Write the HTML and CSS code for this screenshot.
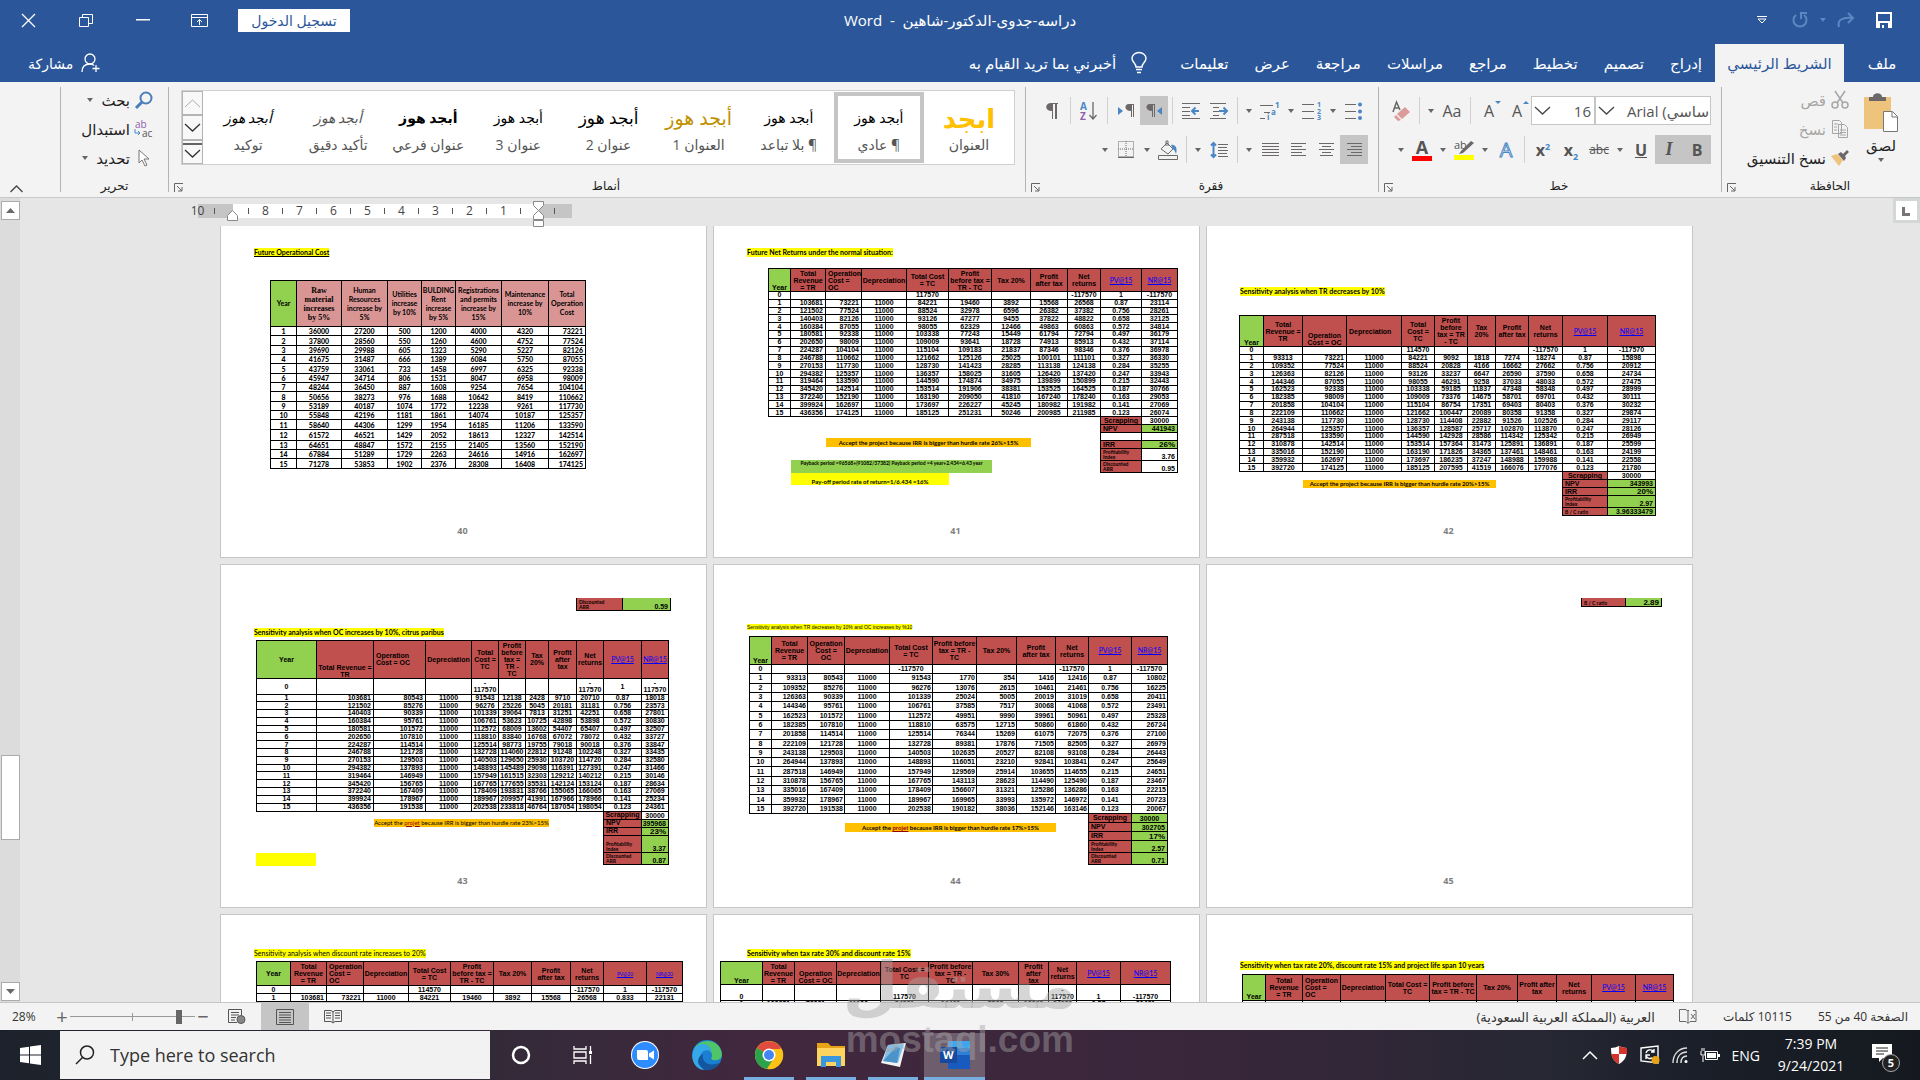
FILE: index.html
```html
<!DOCTYPE html>
<html lang="ar">
<head>
    <meta charset="UTF-8">
    <meta name="viewport" content="width=device-width, initial-scale=1.0">
    <title>دراسه-جدوى-الدكتور-شاهين - Word</title>
    <link rel="stylesheet" href="styles.css">
</head>
<body>
    <header class="titlebar" dir="rtl">
        <div class="quick">
            <button aria-label="حفظ"><svg width="16" height="16" viewBox="0 0 16 16"><path fill="#fff" fill-rule="evenodd" d="M0 0h16v16H0zM2 2v7h12V2zM4 11v5h2v-3h2v3h4v-5z"/></svg></button>
            <button aria-label="إعادة"><svg width="18" height="16" viewBox="0 0 18 16" fill="none" stroke="#5b87c2" stroke-width="2"><path d="M2 15C0 8 5 5 16 6M11 1l5 5-5 5"/></svg></button>
            <span class="arrow faded"></span>
            <button aria-label="تراجع"><svg width="16" height="16" viewBox="0 0 16 16" fill="none" stroke="#5b87c2" stroke-width="2"><path d="M4 3a6.500 6.500 0 1 0 8 0M9 7V1h6"/></svg></button>
            <button aria-label="تخصيص"><svg width="10" height="8" viewBox="0 0 10 8" fill="none" stroke="#fff"><path d="M0 .5h10M1 3h8L5 7z"/></svg></button>
        </div>
        <div class="doc-title">دراسه-جدوى-الدكتور-شاهين &nbsp;-&nbsp; Word</div>
        <div class="window-buttons">
            <button class="sign-in">تسجيل الدخول</button>
            <button aria-label="خيارات الشريط"><svg width="17" height="13" viewBox="0 0 17 13" fill="none" stroke="#fff"><path d="M.5.500h16v12H.5zM.5 3.500h16M8.500 11V5.500M6 8l2.500-2.500L11 8"/></svg></button>
            <button aria-label="تصغير"><svg width="14" height="2" viewBox="0 0 14 2"><path fill="#fff" d="M0 0h14v1.500H0z"/></svg></button>
            <button aria-label="استعادة"><svg width="14" height="13" viewBox="0 0 14 13" fill="none" stroke="#fff"><path d="M.5 3.500h9v9h-9zM3.500 3V.5h10v9H10"/></svg></button>
            <button aria-label="إغلاق"><svg width="13" height="13" viewBox="0 0 13 13" stroke="#fff" stroke-width="1.300"><path d="M0 0l13 13M13 0L0 13"/></svg></button>
        </div>
    </header>

    <nav class="tabs" dir="rtl">
        <button class="file">ملف</button>
        <button class="active">الشريط الرئيسي</button>
        <button>إدراج</button>
        <button>تصميم</button>
        <button>تخطيط</button>
        <button>مراجع</button>
        <button>مراسلات</button>
        <button>مراجعة</button>
        <button>عرض</button>
        <button>تعليمات</button>
        <button class="tell-me"><svg width="16" height="22" viewBox="0 0 16 22" fill="none" stroke="#fff" stroke-width="1.400"><path d="M5 15C5 11 1 10 1 6.500a7 6 0 0 1 14 0C15 10 11 11 11 15zM5 17.500h6M6 20.500h4"/></svg>أخبرني بما تريد القيام به</button>
        <button class="share"><svg width="20" height="20" viewBox="0 0 20 20" fill="none" stroke="#fff" stroke-width="1.300"><circle cx="9" cy="6" r="5"/><path d="M1 19c0-5 3-8 8-8 2 0 3 .5 4 1.500M15 12v7M11.500 15.500h7"/></svg>مشاركة</button>
    </nav>

    <section class="ribbon" dir="rtl">
        <div class="group clipboard">
            <div class="group-body">
                <button class="paste"><svg width="36" height="40" viewBox="0 0 36 40"><path fill="#eec47c" d="M1 5h27v32H1z"/><path fill="#6d6868" d="M6 9V5h4c0-5 9-5 9 0h4v4z"/><path fill="#fff" stroke="#777" d="M20.500 19.500h9l5 5v15h-14z"/><path fill="none" stroke="#777" d="M29 20v5h5"/></svg><span>لصق</span><span class="arrow"></span></button>
                <div class="stack">
                    <button class="off"><svg width="18" height="18" viewBox="0 0 18 18" fill="none" stroke="#a6a6a6" stroke-width="1.500"><path d="M4 0l8 12M14 0L6 12"/><circle cx="4" cy="14" r="3"/><circle cx="14" cy="14" r="3"/></svg>قص</button>
                    <button class="off"><svg width="18" height="18" viewBox="0 0 18 18" fill="#f3f3f3" stroke="#a6a6a6"><path d="M1.500.500h7l2 2v11h-9zM7.500 4.500h6l3 3v10h-9zM9 10h6M9 12.500h6M9 15h6M3 4h4M3 7h3M3 10h3"/></svg>نسخ</button>
                    <button><svg width="18" height="16" viewBox="0 0 18 16"><path fill="#eec47c" d="M0 6l6-2 6 6-4 6z"/><path fill="#6d6868" d="M7 4l3-2 2 2 4-4 2 2-4 4 1 2-2 3z"/></svg>نسخ التنسيق</button>
                </div>
            </div>
            <div class="group-label">الحافظة<svg class="launcher" width="9" height="9" viewBox="0 0 9 9" fill="none" stroke="#666"><path d="M.5 9V.5H9M3 3l5 5M8 4v4H4"/></svg></div>
        </div>

        <div class="group font">
            <div class="group-body rows">
                <div class="tools">
                    <label class="combo name"><input type="text" value="ساسي) Arial" aria-label="الخط"><svg width="17" height="9" viewBox="0 0 17 9" fill="none" stroke="#444" stroke-width="1.300"><path d="M1 1l7.500 7L16 1"/></svg></label>
                    <label class="combo size"><input type="text" value="16" aria-label="حجم الخط"><svg width="17" height="9" viewBox="0 0 17 9" fill="none" stroke="#444" stroke-width="1.300"><path d="M1 1l7.500 7L16 1"/></svg></label>
                    <button>A<i class="up"></i></button>
                    <button>A<i class="down"></i></button>
                    <span class="sep"></span>
                    <button>Aa</button><span class="arrow"></span>
                    <span class="sep"></span>
                    <button aria-label="مسح التنسيق"><svg width="18" height="20" viewBox="0 0 18 20"><path fill="none" stroke="#666" stroke-width="1.500" d="M1 11L4.500 1 8 9M2.500 7h4"/><path fill="#dc9a98" d="M5 13l8-7 5 5-8 7zM4 14l5 5-3 1-4-4z"/></svg></button>
                </div>
                <div class="tools">
                    <button class="on"><b>B</b></button>
                    <button class="on"><b class="serif">I</b></button>
                    <button><b class="under">U</b></button><span class="arrow"></span>
                    <button class="strike">abc</button>
                    <button><b dir="ltr">x<sub>2</sub></b></button>
                    <button><b dir="ltr">x<sup>2</sup></b></button>
                    <span class="sep"></span>
                    <button class="glow">A</button><span class="arrow"></span>
                    <button aria-label="تمييز"><svg width="20" height="20" viewBox="0 0 20 20"><text x="0" y="9" font-size="11" fill="#555">ab</text><path fill="#6d6868" d="M17 1l3 2-11 10-4 1 2-3z"/><path fill="#ff0" d="M0 15h20v5H0z"/></svg></button><span class="arrow"></span>
                    <button class="color"><b>A</b></button><span class="arrow"></span>
                </div>
            </div>
            <div class="group-label">خط<svg class="launcher" width="9" height="9" viewBox="0 0 9 9" fill="none" stroke="#666"><path d="M.5 9V.5H9M3 3l5 5M8 4v4H4"/></svg></div>
        </div>

        <div class="group paragraph">
            <div class="group-body rows">
                <div class="tools">
                    <button aria-label="تعداد نقطي"><svg width="18" height="18" viewBox="0 0 18 18"><path stroke="#6d6868" d="M0 2.500h11M0 9.500h11M0 16.500h11"/><g fill="#4a86c5"><circle cx="15" cy="2.500" r="2"/><circle cx="15" cy="9.500" r="2"/><circle cx="15" cy="16" r="2"/></g></svg></button><span class="arrow"></span>
                    <button aria-label="ترقيم"><svg width="20" height="18" viewBox="0 0 20 18"><path stroke="#6d6868" d="M0 2.500h12M0 9.500h12M0 16.500h12"/><g font-size="7" font-weight="bold" fill="#4a86c5"><text x="15" y="5">1</text><text x="15" y="12">2</text><text x="15" y="18">3</text></g></svg></button><span class="arrow"></span>
                    <button aria-label="قائمة متعددة المستويات"><svg width="20" height="18" viewBox="0 0 20 18"><path stroke="#6d6868" d="M0 3.500h13M4 10.500h6M0 16.500h5"/><g font-size="8" font-weight="bold" fill="#4a86c5"><text x="15" y="6">1</text><text x="11" y="13">a</text><text x="7" y="18">i</text></g></svg></button><span class="arrow"></span>
                    <span class="sep"></span>
                    <button aria-label="إنقاص المسافة البادئة"><svg width="18" height="18" viewBox="0 0 18 18"><path stroke="#6d6868" d="M0 1.500h16M3 5.500h6M3 9.500h6M3 13.500h6M0 16.500h16"/><path stroke="#4a86c5" stroke-width="2" fill="none" d="M9 9h8M13.500 5.500L17 9l-3.500 3.500"/></svg></button>
                    <button aria-label="زيادة المسافة البادئة"><svg width="18" height="18" viewBox="0 0 18 18"><path stroke="#6d6868" d="M0 1.500h18M0 5.500h8M0 9.500h8M0 13.500h8M0 16.500h18"/><path stroke="#4a86c5" stroke-width="2" fill="none" d="M17 9h-7M13.500 5.500L10 9l3.500 3.500"/></svg></button>
                    <span class="sep"></span>
                    <button class="on" aria-label="من اليمين إلى اليسار"><svg width="16" height="14" viewBox="0 0 16 14"><path fill="#6d6868" d="M4 0h5v13H8V1H7v12H6V7C-1 7-1 0 4 0z"/><path fill="#4a86c5" d="M16 3v8l-5-4z"/></svg></button>
                    <button aria-label="من اليسار إلى اليمين"><svg width="16" height="14" viewBox="0 0 16 14"><path fill="#6d6868" d="M11 0h5v13h-1V1h-1v12h-1V7C6 7 6 0 11 0z"/><path fill="#4a86c5" d="M0 3v8l5-4z"/></svg></button>
                    <span class="sep"></span>
                    <button aria-label="فرز"><svg width="18" height="20" viewBox="0 0 18 20"><g font-size="10" font-weight="bold"><text x="0" y="9" fill="#4a86c5">A</text><text x="0" y="19" fill="#8f5fae">Z</text></g><path fill="none" stroke="#6d6868" stroke-width="1.300" d="M13 1v17M9.500 14l3.500 4 3.500-4"/></svg></button>
                    <span class="sep"></span>
                    <button aria-label="إظهار العلامات"><svg width="12" height="16" viewBox="0 0 12 16"><path fill="#6d6868" d="M5 0h7v1h-1v15H9V1H7v15H6V8C-2 8-1 0 5 0z"/></svg></button>
                </div>
                <div class="tools">
                    <button class="on" aria-label="محاذاة لليمين"><svg width="15" height="13" viewBox="0 0 15 13" stroke="#6d6868"><path d="M0 .5h15M4 3.500h11M0 6.500h15M4 9.500h11M0 12.500h15"/></svg></button>
                    <button aria-label="توسيط"><svg width="15" height="13" viewBox="0 0 15 13" stroke="#6d6868"><path d="M0 .5h15M3 3.500h9M0 6.500h15M3 9.500h9M1 12.500h13"/></svg></button>
                    <button aria-label="محاذاة لليسار"><svg width="15" height="13" viewBox="0 0 15 13" stroke="#6d6868"><path d="M0 .5h15M0 3.500h11M0 6.500h15M0 9.500h11M0 12.500h15"/></svg></button>
                    <button aria-label="ضبط"><svg width="17" height="13" viewBox="0 0 17 13" stroke="#6d6868"><path d="M0 .5h17M0 3.500h17M0 6.500h17M0 9.500h17M0 12.500h17"/></svg></button><span class="arrow"></span>
                    <span class="sep"></span>
                    <button aria-label="تباعد الأسطر"><svg width="18" height="18" viewBox="0 0 18 18"><path stroke="#6d6868" d="M8 3.500h10M8 6.500h9M8 9.500h10M8 12.500h9M8 15.500h10"/><path stroke="#4a86c5" stroke-width="2" fill="none" d="M3.500 2v14M1 4.500L3.500 2 6 4.500M1 13.500L3.500 16 6 13.500"/></svg></button><span class="arrow"></span>
                    <span class="sep"></span>
                    <button aria-label="تظليل"><svg width="20" height="20" viewBox="0 0 20 20" fill="none" stroke="#6d6868"><path d="M.5 15.500h19v4H.5zM3 9l6-6 6 6-5 5zM8 6V1h2v5"/><path fill="#4a86c5" stroke="none" d="M13 5c4-1 7 3 5 9-1-3-2-4-3-5z"/></svg></button><span class="arrow"></span>
                    <button aria-label="حدود"><svg width="16" height="17" viewBox="0 0 16 17" fill="none" stroke="#6d6868"><path stroke-dasharray="1 1" d="M.5.500h15v15H.5zM8 0v16M0 8h16"/><path d="M0 16.500h16"/></svg></button><span class="arrow"></span>
                </div>
            </div>
            <div class="group-label">فقرة<svg class="launcher" width="9" height="9" viewBox="0 0 9 9" fill="none" stroke="#666"><path d="M.5 9V.5H9M3 3l5 5M8 4v4H4"/></svg></div>
        </div>

        <div class="group styles">
            <div class="group-body">
                <div class="gallery">
                    <button><span class="sample big">ابجد</span>العنوان</button>
                    <button class="selected"><span class="sample">أبجد هوز</span>¶ عادي</button>
                    <button><span class="sample">أبجد هوز</span>¶ بلا تباعد</button>
                    <button><span class="sample gold">أبجد هوز</span>العنوان 1</button>
                    <button><span class="sample mid">أبجد هوز</span>عنوان 2</button>
                    <button><span class="sample">أبجد هوز</span>عنوان 3</button>
                    <button><span class="sample bold">أبجد هوز</span>عنوان فرعي</button>
                    <button><span class="sample slant grey">أبجد هوز</span>تأكيد دقيق</button>
                    <button><span class="sample slant">أبجد هوز</span>توكيد</button>
                    <div class="gallery-scroll">
                        <button aria-label="أعلى"><svg width="17" height="9" viewBox="0 0 17 9" fill="none" stroke="#aaa"><path d="M1 8l7.500-7L16 8"/></svg></button>
                        <button aria-label="أسفل"><svg width="17" height="9" viewBox="0 0 17 9" fill="none" stroke="#333" stroke-width="1.300"><path d="M1 1l7.500 7L16 1"/></svg></button>
                        <button aria-label="المزيد"><svg width="19" height="17" viewBox="0 0 19 17" fill="none" stroke="#333" stroke-width="1.300"><path d="M0 1h19M2 7l7.500 7L17 7"/></svg></button>
                    </div>
                </div>
            </div>
            <div class="group-label">أنماط<svg class="launcher" width="9" height="9" viewBox="0 0 9 9" fill="none" stroke="#666"><path d="M.5 9V.5H9M3 3l5 5M8 4v4H4"/></svg></div>
        </div>

        <div class="group editing">
            <div class="group-body">
                <div class="stack">
                    <button><svg width="18" height="18" viewBox="0 0 18 18" fill="none" stroke="#4a7ebb" stroke-width="2"><circle cx="11" cy="7" r="5.500"/><path stroke-width="3" d="M7 11l-6 6"/></svg>بحث<span class="arrow"></span></button>
                    <button><svg width="20" height="20" viewBox="0 0 20 20"><text x="1" y="9" font-size="10" fill="#8f5fae">ab</text><text x="8" y="18" font-size="10" fill="#555">ac</text><path fill="none" stroke="#4a86c5" d="M1 10v4h5M4 12l2 2-2 2"/></svg>استبدال</button>
                    <button><svg width="14" height="18" viewBox="0 0 14 18" fill="#fff" stroke="#777"><path d="M2 1v13l3-3 3 6 2-1-3-6h5z"/></svg>تحديد<span class="arrow"></span></button>
                </div>
            </div>
            <div class="group-label">تحرير</div>
        </div>
        <button class="collapse" aria-label="طي الشريط"><svg width="13" height="8" viewBox="0 0 13 8" fill="none" stroke="#444" stroke-width="1.300"><path d="M.5 7l6-6 6 6"/></svg></button>
    </section>

    <main class="workspace">
        <div class="scrollbar">
            <button aria-label="أعلى"><svg width="9" height="5" viewBox="0 0 9 5"><path fill="#6d6868" d="M0 5l4.500-5L9 5z"/></svg></button>
            <div class="thumb"></div>
            <button aria-label="أسفل"><svg width="9" height="5" viewBox="0 0 9 5"><path fill="#6d6868" d="M0 0l4.500 5L9 0z"/></svg></button>
        </div>

        <div class="canvas">
            <div class="ruler">
                <span>10</span><i></i><span></span><i></i><span>8</span><i></i><span>7</span><i></i><span>6</span><i></i><span>5</span><i></i><span>4</span><i></i><span>3</span><i></i><span>2</span><i></i><span>1</span><i></i><span></span><i></i>
                <svg class="marker left" width="11" height="11" viewBox="0 0 11 11" fill="#fff" stroke="#888"><path d="M.5 10.500v-5l5-5 5 5v5z"/></svg>
                <svg class="marker right" width="11" height="26" viewBox="0 0 11 26" fill="#fff" stroke="#888"><path d="M.5.500h10v4l-5 5-5-5zM.5 18.500v-4l5-5 5 5v4zM.5 19.500h10v6H.5z"/></svg>
            </div>

            <div class="pages">
                <article class="page first">
                    <h2 class="p40"><u>Future Operational Cost</u></h2>
                    <table class="sheet t40">
                        <colgroup><col style="width:26px"><col style="width:45px"><col style="width:46px"><col style="width:34px"><col style="width:34px"><col style="width:46px"><col style="width:47px"><col style="width:37px"></colgroup>
                        <thead><tr><th>Year<th class="serif">Raw<br>material<br>increases<br>by 5%<th>Human Resources increase by 5%<th>Utilities increase by 10%<th>BULDING Rent increase by 5%<th>Registrations and permits increase by 15%<th>Maintenance increase by 10%<th>Total Operation Cost</thead>
                        <tbody>
                        <tr><td>1<td>36000<td>27200<td>500<td>1200<td>4000<td>4320<td>73221
                        <tr><td>2<td>37800<td>28560<td>550<td>1260<td>4600<td>4752<td>77524
                        <tr><td>3<td>39690<td>29988<td>605<td>1323<td>5290<td>5227<td>82126
                        <tr><td>4<td>41675<td>31487<td>666<td>1389<td>6084<td>5750<td>87055
                        <tr><td>5<td>43759<td>33061<td>733<td>1458<td>6997<td>6325<td>92338
                        <tr><td>6<td>45947<td>34714<td>806<td>1531<td>8047<td>6958<td>98009
                        <tr><td>7<td>48244<td>36450<td>887<td>1608<td>9254<td>7654<td>104104
                        <tr><td>8<td>50656<td>38273<td>976<td>1688<td>10642<td>8419<td>110662
                        <tr><td>9<td>53189<td>40187<td>1074<td>1772<td>12238<td>9261<td>117730
                        <tr><td>10<td>55848<td>42196<td>1181<td>1861<td>14074<td>10187<td>125357
                        <tr><td>11<td>58640<td>44306<td>1299<td>1954<td>16185<td>11206<td>133590
                        <tr class="tall"><td>12<td>61572<td>46521<td>1429<td>2052<td>18613<td>12327<td>142514
                        <tr><td>13<td>64651<td>48847<td>1572<td>2155<td>21405<td>13560<td>152190
                        <tr><td>14<td>67884<td>51289<td>1729<td>2263<td>24616<td>14916<td>162697
                        <tr><td>15<td>71278<td>53853<td>1902<td>2376<td>28308<td>16408<td>174125
                        </tbody>
                    </table>
                    <footer>40</footer>
                </article>

                <article class="page first">
                    <h2 class="p41">Future Net Returns under the normal situation:</h2>
                    <div class="block b41">
                        <table class="sheet red t41">
                            <colgroup><col style="width:22px"><col style="width:35px"><col style="width:36px"><col style="width:45px"><col style="width:42px"><col style="width:43px"><col style="width:39px"><col style="width:37px"><col style="width:33px"><col style="width:41px"><col style="width:36px"></colgroup>
                            <thead><tr><th>Year<th>Total Revenue = TR<th class="start">Operation Cost =<br>OC<th>Depreciation<th>Total Cost<br>= TC<th>Profit<br>before tax =<br>TR - TC<th>Tax 20%<th>Profit<br>after tax<th>Net returns<th><a href="#">PV@15</a><th><a href="#">NR@15</a></thead>
                            <tbody>
                            <tr><td>0<td><td><td><td>117570<td><td><td><td>-117570<td>1<td>-117570
                            <tr><td>1<td>103681<td>73221<td>11000<td>84221<td>19460<td>3892<td>15568<td>26568<td>0.87<td>23114
                            <tr><td>2<td>121502<td>77524<td>11000<td>88524<td>32978<td>6596<td>26382<td>37382<td>0.756<td>28261
                            <tr><td>3<td>140403<td>82126<td>11000<td>93126<td>47277<td>9455<td>37822<td>48822<td>0.658<td>32125
                            <tr><td>4<td>160384<td>87055<td>11000<td>98055<td>62329<td>12466<td>49863<td>60863<td>0.572<td>34814
                            <tr><td>5<td>180581<td>92338<td>11000<td>103338<td>77243<td>15449<td>61794<td>72794<td>0.497<td>36179
                            <tr><td>6<td>202650<td>98009<td>11000<td>109009<td>93641<td>18728<td>74913<td>85913<td>0.432<td>37114
                            <tr><td>7<td>224287<td>104104<td>11000<td>115104<td>109183<td>21837<td>87346<td>98346<td>0.376<td>36978
                            <tr><td>8<td>246788<td>110662<td>11000<td>121662<td>125126<td>25025<td>100101<td>111101<td>0.327<td>36330
                            <tr><td>9<td>270153<td>117730<td>11000<td>128730<td>141423<td>28285<td>113138<td>124138<td>0.284<td>35255
                            <tr><td>10<td>294382<td>125357<td>11000<td>136357<td>158025<td>31605<td>126420<td>137420<td>0.247<td>33943
                            <tr><td>11<td>319464<td>133590<td>11000<td>144590<td>174874<td>34975<td>139899<td>150899<td>0.215<td>32443
                            <tr><td>12<td>345420<td>142514<td>11000<td>153514<td>191906<td>38381<td>153525<td>164525<td>0.187<td>30766
                            <tr><td>13<td>372240<td>152190<td>11000<td>163190<td>209050<td>41810<td>167240<td>178240<td>0.163<td>29053
                            <tr><td>14<td>399924<td>162697<td>11000<td>173697<td>226227<td>45245<td>180982<td>191982<td>0.141<td>27069
                            <tr><td>15<td>436356<td>174125<td>11000<td>185125<td>251231<td>50246<td>200985<td>211985<td>0.123<td>26074
                            </tbody>
                        </table>
                        <div class="after">
                            <div class="notes">
                                <p class="accept n41">Accept the project because IRR is bigger than hurdle rate 26%&gt;15%</p>
                                <p class="payback">Payback period =96568+(91082/37382) Payback period =4 year+2.434=6.43 year</p>
                                <p class="payoff">Pay-off period rate of return=1/6.434 =16%</p>
                            </div>
                            <table class="summary s41">
                                <colgroup><col style="width:41px"><col style="width:36px"></colgroup>
                                <tr><th class="mid">Scrapping<td class="plain mid">30000
                                <tr><th>NPV<td>441943
                                <tr><td class="plain"><td class="plain">
                                <tr><th>IRR<td class="pct">26%
                                <tr class="two"><th class="fine">Profitability<br>Index<td class="plain">3.76
                                <tr class="two"><th class="fine">Discounted<br>ARR<td class="plain">0.95
                            </table>
                        </div>
                    </div>
                    <footer>41</footer>
                </article>

                <article class="page first">
                    <h2 class="p42">Sensitivity analysis when TR decreases by 10%</h2>
                    <div class="block b42">
                        <table class="sheet red t42">
                            <colgroup><col style="width:24px"><col style="width:39px"><col style="width:44px"><col style="width:55px"><col style="width:33px"><col style="width:33px"><col style="width:28px"><col style="width:33px"><col style="width:34px"><col style="width:45px"><col style="width:48px"></colgroup>
                            <thead><tr><th>Year<th>Total Revenue =<br>TR<th class="low">Operation Cost = OC<th class="start">Depreciation<th>Total Cost =<br>TC<th>Profit<br>before<br>tax = TR<br>- TC<th>Tax 20%<th>Profit<br>after tax<th>Net returns<th><a href="#">PV@15</a><th><a href="#">NR@15</a></thead>
                            <tbody>
                            <tr><td>0<td><td><td><td>114570<td><td><td><td>-117570<td>1<td>-117570
                            <tr><td>1<td>93313<td>73221<td>11000<td>84221<td>9092<td>1818<td>7274<td>18274<td>0.87<td>15898
                            <tr><td>2<td>109352<td>77524<td>11000<td>88524<td>20828<td>4166<td>16662<td>27662<td>0.756<td>20912
                            <tr><td>3<td>126363<td>82126<td>11000<td>93126<td>33237<td>6647<td>26590<td>37590<td>0.658<td>24734
                            <tr><td>4<td>144346<td>87055<td>11000<td>98055<td>46291<td>9258<td>37033<td>48033<td>0.572<td>27475
                            <tr><td>5<td>162523<td>92338<td>11000<td>103338<td>59185<td>11837<td>47348<td>58348<td>0.497<td>28999
                            <tr><td>6<td>182385<td>98009<td>11000<td>109009<td>73376<td>14675<td>58701<td>69701<td>0.432<td>30111
                            <tr><td>7<td>201858<td>104104<td>11000<td>115104<td>86754<td>17351<td>69403<td>80403<td>0.376<td>30232
                            <tr><td>8<td>222109<td>110662<td>11000<td>121662<td>100447<td>20089<td>80358<td>91358<td>0.327<td>29874
                            <tr><td>9<td>243138<td>117730<td>11000<td>128730<td>114408<td>22882<td>91526<td>102526<td>0.284<td>29117
                            <tr><td>10<td>264944<td>125357<td>11000<td>136357<td>128587<td>25717<td>102870<td>113870<td>0.247<td>28126
                            <tr><td>11<td>287518<td>133590<td>11000<td>144590<td>142928<td>28586<td>114342<td>125342<td>0.215<td>26949
                            <tr><td>12<td>310878<td>142514<td>11000<td>153514<td>157364<td>31473<td>125891<td>136891<td>0.187<td>25599
                            <tr><td>13<td>335016<td>152190<td>11000<td>163190<td>171826<td>34365<td>137461<td>148461<td>0.163<td>24199
                            <tr><td>14<td>359932<td>162697<td>11000<td>173697<td>186235<td>37247<td>148988<td>159988<td>0.141<td>22558
                            <tr><td>15<td>392720<td>174125<td>11000<td>185125<td>207595<td>41519<td>166076<td>177076<td>0.123<td>21780
                            </tbody>
                        </table>
                        <div class="after">
                            <div class="notes">
                                <p class="accept n42">Accept the project because IRR is bigger than hurdle rate 20%&gt;15%</p>
                            </div>
                            <table class="summary s42">
                                <colgroup><col style="width:45px"><col style="width:48px"></colgroup>
                                <tr><th class="mid">Scrapping<td class="plain mid">30000
                                <tr><th>NPV<td>343993
                                <tr><th>IRR<td class="pct">20%
                                <tr class="two"><th class="fine">Profitability<br>Index<td>2.97
                                <tr><th class="fine">B / C ratio<td>3.96333479
                            </table>
                        </div>
                    </div>
                    <footer>42</footer>
                </article>

                <article class="page">
                    <table class="summary carry c43">
                        <colgroup><col style="width:46px"><col style="width:48px"></colgroup>
                        <tr class="two"><th class="fine">Discounted<br>ARR<td>0.59
                    </table>
                    <h2 class="p43">Sensitivity analysis when OC increases by 10%, citrus paribus</h2>
                    <div class="block b43">
                        <table class="sheet red t43">
                            <colgroup><col style="width:60px"><col style="width:57px"><col style="width:52px"><col style="width:46px"><col style="width:27px"><col style="width:27px"><col style="width:23px"><col style="width:28px"><col style="width:27px"><col style="width:38px"><col style="width:27px"></colgroup>
                            <thead><tr><th>Year<th class="low">Total Revenue =<br>TR<th class="start">Operation<br>Cost = OC<th>Depreciation<th>Total Cost =<br>TC<th>Profit<br>before<br>tax =<br>TR -<br>TC<th>Tax 20%<th>Profit<br>after<br>tax<th>Net returns<th><a href="#">PV@15</a><th><a href="#">NR@15</a></thead>
                            <tbody>
                            <tr class="zero"><td>0<td><td><td><td>-<br>117570<td><td><td><td>-<br>117570<td>1<td>-<br>117570
                            <tr><td>1<td>103681<td>80543<td>11000<td>91543<td>12138<td>2428<td>9710<td>20710<td>0.87<td>18018
                            <tr><td>2<td>121502<td>85276<td>11000<td>96276<td>25226<td>5045<td>20181<td>31181<td>0.756<td>23573
                            <tr><td>3<td>140403<td>90339<td>11000<td>101339<td>39064<td>7813<td>31251<td>42251<td>0.658<td>27801
                            <tr><td>4<td>160384<td>95761<td>11000<td>106761<td>53623<td>10725<td>42898<td>53898<td>0.572<td>30830
                            <tr><td>5<td>180581<td>101572<td>11000<td>112572<td>68009<td>13602<td>54407<td>65407<td>0.497<td>32507
                            <tr><td>6<td>202650<td>107810<td>11000<td>118810<td>83840<td>16768<td>67072<td>78072<td>0.432<td>33727
                            <tr><td>7<td>224287<td>114514<td>11000<td>125514<td>98773<td>19755<td>79018<td>90018<td>0.376<td>33847
                            <tr><td>8<td>246788<td>121728<td>11000<td>132728<td>114060<td>22812<td>91248<td>102248<td>0.327<td>33435
                            <tr><td>9<td>270153<td>129503<td>11000<td>140503<td>129650<td>25930<td>103720<td>114720<td>0.284<td>32580
                            <tr><td>10<td>294382<td>137893<td>11000<td>148893<td>145489<td>29098<td>116391<td>127391<td>0.247<td>31466
                            <tr><td>11<td>319464<td>146949<td>11000<td>157949<td>161515<td>32303<td>129212<td>140212<td>0.215<td>30146
                            <tr><td>12<td>345420<td>156765<td>11000<td>167765<td>177655<td>35531<td>142124<td>153124<td>0.187<td>28634
                            <tr><td>13<td>372240<td>167409<td>11000<td>178409<td>193831<td>38766<td>155065<td>166065<td>0.163<td>27069
                            <tr><td>14<td>399924<td>178967<td>11000<td>189967<td>209957<td>41991<td>167966<td>178966<td>0.141<td>25234
                            <tr><td>15<td>436356<td>191538<td>11000<td>202538<td>233818<td>46764<td>187054<td>198054<td>0.123<td>24361
                            </tbody>
                        </table>
                        <div class="after">
                            <div class="notes">
                                <p class="accept n43">Accept the <span class="typo">projet</span> because IRR is bigger than hurdle rate 23%&gt;15%</p>
                                <p class="blank"></p>
                            </div>
                            <table class="summary s43">
                                <colgroup><col style="width:38px"><col style="width:27px"></colgroup>
                                <tr><th class="mid">Scrapping<td class="plain mid">30000
                                <tr><th>NPV<td>395968
                                <tr><th>IRR<td class="pct">23%
                                <tr class="three"><th class="fine">Profitability<br>Index<td>3.37
                                <tr class="two"><th class="fine">Discounted<br>ARR<td>0.87
                            </table>
                        </div>
                    </div>
                    <footer>43</footer>
                </article>

                <article class="page">
                    <h2 class="p44">Sensitivity analysis when TR decreases by 10% and OC increases by %10</h2>
                    <div class="block b44">
                        <table class="sheet red t44">
                            <colgroup><col style="width:22px"><col style="width:36px"><col style="width:37px"><col style="width:45px"><col style="width:43px"><col style="width:44px"><col style="width:40px"><col style="width:39px"><col style="width:33px"><col style="width:43px"><col style="width:36px"></colgroup>
                            <thead><tr><th>Year<th>Total Revenue<br>= TR<th>Operation Cost =<br>OC<th>Depreciation<th>Total Cost<br>= TC<th>Profit before<br>tax = TR -<br>TC<th>Tax 20%<th>Profit<br>after tax<th>Net returns<th><a href="#">PV@15</a><th><a href="#">NR@15</a></thead>
                            <tbody>
                            <tr class="centered"><td>0<td><td><td><td>-117570<td><td><td><td>-117570<td>1<td>-117570
                            <tr><td>1<td>93313<td>80543<td>11000<td>91543<td>1770<td>354<td>1416<td>12416<td>0.87<td>10802
                            <tr><td>2<td>109352<td>85276<td>11000<td>96276<td>13076<td>2615<td>10461<td>21461<td>0.756<td>16225
                            <tr><td>3<td>126363<td>90339<td>11000<td>101339<td>25024<td>5005<td>20019<td>31019<td>0.658<td>20411
                            <tr><td>4<td>144346<td>95761<td>11000<td>106761<td>37585<td>7517<td>30068<td>41068<td>0.572<td>23491
                            <tr><td>5<td>162523<td>101572<td>11000<td>112572<td>49951<td>9990<td>39961<td>50961<td>0.497<td>25328
                            <tr><td>6<td>182385<td>107810<td>11000<td>118810<td>63575<td>12715<td>50860<td>61860<td>0.432<td>26724
                            <tr><td>7<td>201858<td>114514<td>11000<td>125514<td>76344<td>15269<td>61075<td>72075<td>0.376<td>27100
                            <tr><td>8<td>222109<td>121728<td>11000<td>132728<td>89381<td>17876<td>71505<td>82505<td>0.327<td>26979
                            <tr><td>9<td>243138<td>129503<td>11000<td>140503<td>102635<td>20527<td>82108<td>93108<td>0.284<td>26443
                            <tr><td>10<td>264944<td>137893<td>11000<td>148893<td>116051<td>23210<td>92841<td>103841<td>0.247<td>25649
                            <tr><td>11<td>287518<td>146949<td>11000<td>157949<td>129569<td>25914<td>103655<td>114655<td>0.215<td>24651
                            <tr><td>12<td>310878<td>156765<td>11000<td>167765<td>143113<td>28623<td>114490<td>125490<td>0.187<td>23467
                            <tr><td>13<td>335016<td>167409<td>11000<td>178409<td>156607<td>31321<td>125286<td>136286<td>0.163<td>22215
                            <tr><td>14<td>359932<td>178967<td>11000<td>189967<td>169965<td>33993<td>135972<td>146972<td>0.141<td>20723
                            <tr><td>15<td>392720<td>191538<td>11000<td>202538<td>190182<td>38036<td>152146<td>163146<td>0.123<td>20067
                            </tbody>
                        </table>
                        <div class="after">
                            <div class="notes">
                                <p class="accept n44">Accept the <span class="typo">projet</span> because IRR is bigger than hurdle rate 17%&gt;15%</p>
                            </div>
                            <table class="summary s44">
                                <colgroup><col style="width:43px"><col style="width:36px"></colgroup>
                                <tr><th class="mid">Scrapping<td class="mid">30000
                                <tr><th>NPV<td>302705
                                <tr><th>IRR<td class="pct">17%
                                <tr class="two"><th class="fine">Profitability<br>Index<td>2.57
                                <tr class="two"><th class="fine">Discounted<br>ARR<td>0.71
                            </table>
                        </div>
                    </div>
                    <footer>44</footer>
                </article>

                <article class="page">
                    <table class="summary carry c45">
                        <colgroup><col style="width:44px"><col style="width:36px"></colgroup>
                        <tr><th class="fine">B / C ratio<td class="pct">2.89
                    </table>
                    <footer>45</footer>
                </article>

                <article class="page">
                    <h2 class="p46">Sensitivity analysis when discount rate increases to 20%</h2>
                    <table class="sheet red t46">
                        <colgroup><col style="width:34px"><col style="width:36px"><col style="width:37px"><col style="width:45px"><col style="width:42px"><col style="width:43px"><col style="width:38px"><col style="width:39px"><col style="width:33px"><col style="width:43px"><col style="width:36px"></colgroup>
                        <thead><tr><th>Year<th>Total Revenue<br>= TR<th class="start">Operation Cost =<br>OC<th>Depreciation<th>Total Cost<br>= TC<th>Profit<br>before tax =<br>TR - TC<th>Tax 20%<th>Profit<br>after tax<th>Net returns<th><a class="tiny" href="#">PV@20</a><th><a class="tiny" href="#">NR@20</a></thead>
                        <tbody>
                        <tr><td>0<td><td><td><td>114570<td><td><td><td>-117570<td>1<td>-117570
                        <tr><td>1<td>103681<td>73221<td>11000<td>84221<td>19460<td>3892<td>15568<td>26568<td>0.833<td>22131
                        </tbody>
                    </table>
                </article>

                <article class="page">
                    <h2 class="p47">Sensitivity when tax rate 30% and discount rate 15%</h2>
                    <table class="sheet red t47">
                        <colgroup><col style="width:42px"><col style="width:32px"><col style="width:42px"><col style="width:44px"><col style="width:48px"><col style="width:44px"><col style="width:46px"><col style="width:30px"><col style="width:28px"><col style="width:44px"><col style="width:50px"></colgroup>
                        <thead><tr><th>Year<th>Total Revenue<br>= TR<th class="low">Operation Cost = OC<th>Depreciation<th>Total Cost =<br>TC<th>Profit before<br>tax = TR -<br>TC<th>Tax 30%<th>Profit<br>after<br>tax<th>Net returns<th><a href="#">PV@15</a><th><a href="#">NR@15</a></thead>
                        <tbody>
                        <tr class="zero low"><td>0<td><td><td><td>117570<td><td><td><td>-<br>117570<td>1<td>-117570
                        <tr><td>1<td>103681<td>73221<td>11000<td>84221<td>19460<td>5838<td>13622<td>24622<td>0.87<td>21421
                        </tbody>
                    </table>
                </article>

                <article class="page">
                    <h2 class="p48">Sensitivity when tax rate 20%, discount rate 15% and project life span 10 years</h2>
                    <table class="sheet red t48">
                        <colgroup><col style="width:23px"><col style="width:37px"><col style="width:38px"><col style="width:45px"><col style="width:44px"><col style="width:47px"><col style="width:41px"><col style="width:39px"><col style="width:35px"><col style="width:44px"><col style="width:38px"></colgroup>
                        <thead><tr><th>Year<th>Total Revenue<br>= TR<th class="start">Operation Cost =<br>OC<th>Depreciation<th>Total Cost =<br>TC<th>Profit before<br>tax = TR - TC<th>Tax 20%<th>Profit after<br>tax<th>Net returns<th><a href="#">PV@15</a><th><a href="#">NR@15</a></thead>
                        <tbody>
                        <tr><td>&nbsp;<td><td><td><td><td><td><td><td><td><td>
                        </tbody>
                    </table>
                </article>
            </div>
        </div>

        <div class="corner"><svg width="21" height="19" viewBox="0 0 21 19"><path fill="#fff" d="M0 0h21v19H0z"/><path fill="none" stroke="#777" stroke-width="3" d="M7.500 6v7.500H14"/></svg></div>
    </main>

    <footer class="status" dir="rtl">
        <span class="pages-count">الصفحة 40 من 55</span>
        <span class="words">10115 كلمات</span>
        <svg width="18" height="15" viewBox="0 0 18 15" fill="none" stroke="#666"><path d="M10 1.500H8.500L8 2 7 .5H.5v12H7l2 2 2-2h6V1.500h-3M9 2v12M12 5l4 5M16 5l-4 5"/></svg>
        <span class="language">العربية (المملكة العربية السعودية)</span>
        <div class="views">
            <button aria-label="قراءة"><svg width="18" height="15" viewBox="0 0 18 15" fill="none" stroke="#555"><path d="M.5 1.500H7L9 3l2-1.500h6.500v11H11L9 14l-2-1.500H.5zM9 3v11M2 4h5M2 6.500h5M2 9h5M11 4h5M11 6.500h5M11 9h5"/></svg></button>
            <button class="on" aria-label="تخطيط الطباعة"><svg width="18" height="16" viewBox="0 0 18 16" fill="none" stroke="#555"><path d="M.5.500h17v15H.5zM3 3.500h12M3 6h12M3 8.500h12M3 11h12M3 13.500h12"/></svg></button>
            <button aria-label="تخطيط ويب"><svg width="18" height="15" viewBox="0 0 18 15" fill="none" stroke="#555"><path d="M9 13.500H.5V.5h13V6M3 3.500h8M3 6h8M3 8.500h5M3 11h4"/><circle cx="13" cy="10.500" r="4" fill="#888"/></svg></button>
            <span class="zoom-sign">−</span>
            <input type="range" min="10" max="100" value="20" aria-label="تكبير/تصغير">
            <span class="zoom-sign">+</span>
            <span class="percent" dir="ltr">28%</span>
        </div>
    </footer>

    <div class="taskbar">
        <button class="start" aria-label="Start"><svg width="21" height="20" viewBox="0 0 21 20" fill="#fff"><path d="M0 3l9-1.300V9.500H0zM10 1.500L21 0v9.500H10zM0 10.500h9v7.800L0 17zM10 10.500h11V20l-11-1.500z"/></svg></button>
        <label class="search"><svg width="20" height="20" viewBox="0 0 20 20" fill="none" stroke="#222" stroke-width="1.500"><circle cx="12" cy="7.500" r="6.500"/><path d="M7.500 12.500L1 19"/></svg><input type="text" placeholder="Type here to search"></label>
        <button class="app" aria-label="Cortana"><svg width="20" height="20" viewBox="0 0 20 20"><circle cx="10" cy="10" r="8" fill="none" stroke="#fff" stroke-width="2.500"/></svg></button>
        <button class="app" aria-label="Task View"><svg width="20" height="18" viewBox="0 0 20 18" fill="none" stroke="#fff" stroke-width="1.300"><path d="M1 0v3h12V0M1 6h12v6H1zM1 18v-3h12v3M17.500 0v5M17.500 9v9"/><path stroke-width="3" d="M17.500 5v3"/></svg></button>
        <button class="app" aria-label="Zoom"><svg width="28" height="28" viewBox="0 0 28 28"><circle cx="14" cy="14" r="14" fill="#fff"/><circle cx="14" cy="14" r="13" fill="#2d8cff"/><path fill="#fff" d="M6 9h9q2 0 2 2v8H8q-2 0-2-2zM18 12.500l5-3v9l-5-3z"/></svg></button>
        <button class="app" aria-label="Edge"><svg width="30" height="30" viewBox="0 0 30 30"><circle cx="15" cy="15" r="15" fill="#1b7fd1"/><path fill="#4fc469" d="M2 9C8-3 28-2 30 14c0 5-4 7-9 6-3-1-1-2-1-5 0-6-12-9-18-6z"/><path fill="#35a8e8" d="M2 9c6-8 16-6 18 3-4-3-9-2-11 2-3 5-2 12 3 16C2 29-2 18 2 9z"/><path fill="#14559f" d="M11 14c-2 8 6 13 16 9-4 7-14 10-19 3-4-5-1-10 3-12z"/></svg></button>
        <button class="app running" aria-label="Chrome"><svg width="28" height="28" viewBox="0 0 28 28"><circle cx="14" cy="14" r="14" fill="#fbc116"/><path fill="#e04a3f" d="M14 14L2 7A14 14 0 0 1 26 7z"/><path fill="#2ba24c" d="M14 14L2 7a14 14 0 0 0 10 21l7-11z"/><path fill="#fbc116" d="M14 8h12.700A14 14 0 0 1 12 28l8-12z"/><circle cx="14" cy="14" r="6.500" fill="#fff"/><circle cx="14" cy="14" r="5" fill="#4285f4"/></svg></button>
        <button class="app running" aria-label="File Explorer"><svg width="28" height="24" viewBox="0 0 28 24"><path fill="#e8a317" d="M0 0h11l3 3h14v6H0z"/><path fill="#ffd45e" d="M0 5h28v18H0z"/><path fill="#3a97dd" d="M4 13h20v11h-5v-5H9v5H4z"/></svg></button>
        <button class="app running" aria-label="Notepad"><svg width="28" height="26" viewBox="0 0 28 26"><path fill="#f2f2f2" d="M9 3l18-2-6 24-19-4z"/><path fill="#84bfe8" d="M9 3l16-1-6 19-15-2z"/><path fill="#4b94c9" d="M4 19l13-14 4 1-3 15z"/></svg></button>
        <button class="app running current" aria-label="Word"><svg width="30" height="28" viewBox="0 0 30 28"><path fill="#2f7fd8" d="M8 0h22v28H8z"/><path fill="#41a5ee" d="M8 0h22v7H8z"/><path fill="#185abd" d="M8 14h22v14H8z"/><path fill="#174a9c" d="M0 6h17v16H0z"/><text x="3" y="18" font-size="11" font-weight="bold" fill="#fff">W</text></svg></button>
        <div class="tray">
            <svg width="16" height="9" viewBox="0 0 16 9" fill="none" stroke="#fff" stroke-width="1.500"><path d="M1 8l7-7 7 7"/></svg>
            <svg width="18" height="18" viewBox="0 0 18 18"><path fill="#fff" d="M1 2q4 0 8-2 4 2 8 2c0 8-2 13-8 16C3 15 1 10 1 2z"/><path fill="#d3352b" d="M9 0q4 2 8 2v6H9zM9 8v10C4 15.500 2 12 1.300 8z"/></svg>
            <svg width="20" height="20" viewBox="0 0 20 20" fill="none" stroke="#fff" stroke-width="1.400"><path d="M1 3l17-2v17L1 16zM6 8c1-4 6-4 8-1M14 4v3h-3M6 14v-4h4M6 10c1 4 4 4 6 3"/><circle cx="15.500" cy="15" r="4" fill="#e8a317" stroke="none"/></svg>
            <svg width="16" height="16" viewBox="0 0 16 16" fill="none" stroke="#ddd" stroke-width="1.400"><path d="M1 16C1 7 7 1 15 1M5 16c0-7 4-11 10-11M9 16c0-4 2-7 6-7"/><circle cx="14" cy="14.500" r="1.500" fill="#fff" stroke="none"/></svg>
            <svg width="20" height="14" viewBox="0 0 20 14"><path fill="none" stroke="#fff" d="M5.500 3.500h12v8h-12zM3 8v6M1 3v4h4V3M2 0v3M4 0v3"/><path fill="#fff" d="M7 5h9v5H7zM18 6h2v3h-2z"/></svg>
            <span class="lang">ENG</span>
            <time>7:39 PM<br>9/24/2021</time>
            <span class="notice"><svg width="20" height="18" viewBox="0 0 20 18"><path fill="#fff" d="M0 0h20v14h-9l-4 4v-4H0z"/><path stroke="#222" d="M4 4h12M4 7h12M4 10h8"/></svg><b>5</b></span>
        </div>
    </div>

    <div class="watermark"><span class="mark" dir="rtl">مستقل</span><span class="site">mostaql.com</span></div>
</body>
</html>
```

FILE: styles.css
```css
* {
    box-sizing: border-box;
}
body {
    margin: 0;
    height: 100vh;
    display: flex;
    flex-direction: column;
    overflow: hidden;
    font-family: "Open Sans", "DejaVu Sans", sans-serif;
    font-size: 14px;
    color: #333;
    background: #e6e6e6;
}
button, input {
    font: inherit;
    color: inherit;
    background: none;
    border: 0;
    padding: 0;
    margin: 0;
}
button {
    display: flex;
    align-items: center;
    justify-content: center;
    white-space: nowrap;
}
svg {
    flex: none;
    direction: ltr;
    overflow: visible;
}
.arrow {
    flex: none;
    width: 14px;
    display: flex;
    justify-content: center;
}
.arrow::before {
    content: "";
    border: 3px solid transparent;
    border-top: 4px solid #666;
    border-bottom: 0;
}
.arrow.faded::before {
    border-top-color: #5b87c2;
}

/* title bar */
.titlebar {
    flex: none;
    height: 44px;
    padding-bottom: 4px;
    display: flex;
    align-items: center;
    justify-content: space-between;
    background: #2b579a;
    color: #fff;
}
.doc-title {
    font-size: 15px;
}
.quick, .window-buttons {
    display: flex;
    align-items: center;
    flex: 1;
}
.quick button {
    width: 38px;
    height: 32px;
}
.quick button:first-child {
    margin-right: 17px;
}
.quick .arrow {
    width: 8px;
}
.window-buttons {
    justify-content: flex-end;
}
.window-buttons button {
    width: 57px;
    height: 32px;
}
.window-buttons .sign-in {
    width: 112px;
    height: 23px;
    margin-left: 10px;
    background: #fff;
    color: #2b579a;
}

/* tabs */
.tabs {
    flex: none;
    height: 38px;
    display: flex;
    background: #2b579a;
    color: #fff;
    font-size: 15px;
}
.tabs button {
    padding: 0 13px;
}
.tabs .file {
    width: 76px;
}
.tabs .active {
    width: 129px;
    padding: 0;
    background: #f3f3f3;
    color: #2b579a;
}
.tabs .tell-me {
    gap: 15px;
    padding-right: 20px;
}
.tabs .share {
    gap: 8px;
    margin-right: auto;
    padding-left: 28px;
    font-size: 14px;
}

/* ribbon */
.ribbon {
    flex: none;
    height: 116px;
    display: flex;
    background: #f3f3f3;
    border-bottom: 1px solid #c8c8c8;
    color: #222;
}
.group {
    margin: 5px 0;
    border-left: 1px solid #b4b4b4;
    display: flex;
    flex-direction: column;
}
.group-body {
    flex: 1;
    display: flex;
}
.group-label {
    position: relative;
    height: 12px;
    padding-left: 18px;
    font-size: 12px;
    line-height: 12px;
    text-align: center;
}
.editing .group-label {
    padding-left: 0;
}
.launcher {
    position: absolute;
    left: 5px;
    bottom: 0;
}
.clipboard {
    width: 199px;
}
.clipboard .group-body {
    padding-right: 12px;
}
.paste {
    width: 54px;
    height: 80px;
    flex-direction: column;
    gap: 3px;
    font-size: 15px;
}
.stack {
    display: flex;
    flex-direction: column;
    align-items: flex-start;
    justify-content: space-between;
    padding: 3px 4px 7px;
    height: 88px;
    font-size: 15px;
}
.stack button {
    gap: 4px;
    height: 20px;
}
.stack svg {
    width: 20px;
}
.stack .off {
    color: #a6a6a6;
}
.font {
    width: 343px;
}
.paragraph {
    width: 353px;
}
.styles {
    flex: 1;
}
.editing {
    width: 108px;
}
.editing .stack {
    padding-right: 14px;
}
.rows {
    flex-direction: column;
    gap: 10px;
    padding: 9px 10px 0 0;
}
.tools {
    display: flex;
    align-items: center;
    height: 29px;
    color: #555;
    font-size: 16px;
}
.tools button {
    position: relative;
    flex: none;
    width: 28px;
    height: 29px;
}
.tools .on {
    background: #c5c5c5;
}
.tools .up, .tools .down {
    position: absolute;
    top: 5px;
    right: 2px;
    border: 3px solid transparent;
}
.tools .up {
    border-top: 0;
    border-bottom-color: #4a86c5;
}
.tools .down {
    border-bottom: 0;
    border-top-color: #4a86c5;
}
.tools sub, .tools sup {
    font-size: 9px;
    line-height: 0;
    color: #4a86c5;
}
.tools .strike {
    font-size: 12px;
    text-decoration: line-through;
}
.tools .serif {
    font-family: "Liberation Serif", serif;
    font-size: 18px;
    font-style: italic;
}
.tools .under {
    text-decoration: underline;
}
.tools .glow {
    font-size: 20px;
    color: #fff;
    -webkit-text-stroke: 1px #4a86c5;
}
.tools .color b {
    line-height: 18px;
    font-size: 18px;
    border-bottom: 5px solid #f00;
    padding: 0 4px;
}
.sep {
    flex: none;
    width: 1px;
    height: 27px;
    margin: 0 4px;
    background: #d0d0d0;
}
.combo {
    display: flex;
    align-items: center;
    height: 29px;
    border: 1px solid #c5c5c5;
    background: #fff;
    padding: 0 1px 0 2px;
    font-size: 15px;
}
.combo.name {
    width: 116px;
}
.combo.size {
    width: 64px;
    padding-right: 3px;
}
.combo input {
    flex: 1;
    min-width: 0;
    text-align: right;
}

/* style gallery */
.gallery {
    flex: 1;
    display: flex;
    margin: 3px 10px 0 12px;
    height: 75px;
    border: 1px solid #d0d0d0;
    background: #fff;
}
.gallery > button {
    flex: 1;
    min-width: 0;
    flex-direction: column;
    margin: 1px 0;
    border: 4px solid transparent;
    color: #555;
}
.gallery > .selected {
    border-color: #c5c5c5;
}
.sample {
    height: 34px;
    line-height: 34px;
    font-size: 14px;
    color: #000;
}
.sample.big {
    font-size: 26px;
    font-weight: bold;
    color: #ffc000;
}
.sample.gold {
    font-size: 19px;
    color: #bf9000;
}
.sample.mid {
    font-size: 17px;
}
.sample.bold {
    font-weight: bold;
}
.sample.slant {
    font-style: italic;
}
.sample.grey {
    color: #555;
}
.gallery-scroll {
    width: 21px;
    display: flex;
    flex-direction: column;
}
.gallery-scroll button {
    flex: 1;
    border: 1px solid #b4b4b4;
    background: #f8f8f8;
}
.collapse {
    width: 60px;
    align-items: flex-end;
    justify-content: flex-end;
    padding: 0 0 4px 10px;
}

/* document area */
.workspace {
    flex: 1;
    min-height: 0;
    display: flex;
    background: #e6e6e6;
}
.scrollbar {
    flex: none;
    width: 20px;
    display: flex;
    flex-direction: column;
    justify-content: space-between;
    padding: 3px 0 1px 1px;
    background: #dcdcdc;
}
.scrollbar button {
    height: 19px;
    background: #fff;
    border: 1px solid #ababab;
}
.thumb {
    height: 85px;
    margin-top: 392px;
    background: #fff;
    border: 1px solid #ababab;
}
.canvas {
    flex: 1;
    display: flex;
    flex-direction: column;
    overflow: hidden;
}
.ruler {
    position: relative;
    z-index: 1;
    flex: none;
    display: flex;
    align-items: center;
    width: 383px;
    height: 14px;
    margin: 6px 0 8px 169px;
    font-size: 12px;
    line-height: 14px;
    color: #444;
    background: linear-gradient(to right, transparent 9px, #c5c5c5 9px 44px, #fff 44px 349px, #c5c5c5 349px);
}
.ruler span {
    width: 17px;
    text-align: center;
}
.ruler i {
    width: 1px;
    height: 6px;
    margin: 0 8px;
    background: #555;
}
.marker {
    position: absolute;
}
.marker.left {
    left: 38px;
    top: 6px;
}
.marker.right {
    left: 344px;
    top: -3px;
}
.corner {
    flex: none;
    width: 27px;
    height: 25px;
    padding: 3px;
    background: #d3d8d6;
}
.corner svg {
    display: block;
}

/* pages */
.pages {
    display: grid;
    grid-template-columns: repeat(3, 487px);
    justify-content: center;
    gap: 6px;
    direction: ltr;
}
.page {
    height: 344px;
    display: flex;
    flex-direction: column;
    align-items: flex-start;
    background: #fff;
    border: 1px solid #c6c6c6;
    color: #000;
    font-family: "Liberation Sans", sans-serif;
    font-size: 7px;
    line-height: 7px;
}
.page.first {
    height: 332px;
    border-top: 0;
}
.page footer {
    margin-top: auto;
    width: 100%;
    padding: 0 2px 20px 0;
    text-align: center;
    font-family: "Open Sans", sans-serif;
    font-size: 9px;
    line-height: 12px;
    font-weight: bold;
    color: #7f7f7f;
}
.page h2 {
    margin: 0 0 0 33px;
    font-family: Lato, sans-serif;
    font-size: 7px;
    line-height: 9px;
    background: #ff0;
    white-space: nowrap;
}
.page .p40, .page .p41 {
    margin-top: 22px;
}
.page .p42 {
    margin-top: 61px;
}
.page .p43 {
    margin-top: 17px;
}
.page .p44 {
    margin-top: 59px;
    font-family: "Liberation Sans", sans-serif;
    font-size: 5px;
    line-height: 6px;
    font-weight: normal;
}
.page .p46 {
    margin-top: 34px;
    font-weight: normal;
}
.page .p47 {
    margin-top: 34px;
}
.page .p48 {
    margin-top: 46px;
}
.sheet, .summary {
    table-layout: fixed;
    border-collapse: collapse;
    font-weight: bold;
}
.sheet th, .sheet td, .summary th, .summary td {
    border: 1px solid #000;
    padding: 0;
    line-height: 6px;
    text-align: center;
}
.sheet th {
    line-height: 7px;
    background: #d99594;
}
.sheet th:first-child {
    background: #92d050;
}
.sheet.red th {
    background: #c0504d;
}
.sheet.red th:first-child {
    background: #92d050;
}
.sheet th.start {
    text-align: left;
    padding-left: 2px;
}
.sheet th.low, .sheet .low td {
    vertical-align: bottom;
}
.sheet a {
    font-family: Lato, sans-serif;
    font-weight: normal;
    color: #00f;
}
.sheet a.tiny {
    font-size: 5px;
}
.t40 {
    width: 316px;
    height: 189px;
    margin: 23px 0 0 49px;
    font-family: Lato, sans-serif;
    font-weight: 900;
}
.t40 thead {
    height: 46px;
}
.t40 th {
    line-height: 9px;
    font-weight: bold;
}
.t40 th.serif {
    font-family: "Liberation Serif", serif;
    font-size: 8px;
}
.t40 .tall {
    height: 11px;
}
.t40 td:last-child {
    text-align: right;
    padding-right: 2px;
}
.b41 {
    margin: 11px 0 0 54px;
}
.t41 {
    width: 410px;
    height: 149px;
}
.t41 thead {
    height: 23px;
}
.t41 th:first-child, .t42 th:first-child, .t44 th:first-child, .t47 th:first-child, .t48 th:first-child {
    vertical-align: bottom;
}
.t41 td:nth-child(2), .t41 td:nth-child(3), .t42 td:nth-child(3), .t43 td:nth-child(2), .t43 td:nth-child(3), .t46 td:nth-child(2), .t46 td:nth-child(3) {
    text-align: right;
    padding-right: 2px;
}
.b42 {
    margin: 19px 0 0 32px;
}
.t42 {
    width: 417px;
    height: 157px;
}
.t42 thead {
    height: 31px;
}
.b43 {
    margin: 3px 0 0 35px;
}
.t43 {
    width: 413px;
    height: 172px;
}
.t43 thead {
    height: 38px;
}
.sheet .zero {
    height: 16px;
}
.sheet .zero td {
    line-height: 7px;
}
.b44 {
    margin: 6px 0 0 35px;
}
.t44 {
    width: 419px;
    height: 178px;
}
.t44 thead {
    height: 28px;
}
.t44 tr:not(.centered) td:not(:first-child):not(:nth-child(4)):not(:nth-child(10)) {
    text-align: right;
    padding-right: 1px;
}
.t46 {
    width: 427px;
    margin: 3px 0 0 35px;
}
.t46 thead {
    height: 24px;
}
.t46 tbody tr {
    height: 8px;
}
.t47 {
    width: 451px;
    margin: 3px 0 0 6px;
}
.t47 thead {
    height: 23px;
}
.t48 {
    width: 432px;
    margin: 4px 0 0 35px;
}
.t48 thead {
    height: 26px;
}

/* notes and totals under a table */
.after {
    display: flex;
    justify-content: space-between;
    align-items: flex-start;
}
.notes {
    flex: 1;
}
.notes p {
    margin: 0;
    font-family: Lato, sans-serif;
    font-size: 6px;
    font-weight: bold;
    line-height: 9px;
    text-align: center;
    white-space: nowrap;
}
.notes .accept {
    background: #ffc000;
}
.notes .n41 {
    width: 205px;
    margin: 21px 0 13px 58px;
}
.notes .n42 {
    width: 193px;
    line-height: 8px;
    margin: 8px 0 0 64px;
}
.notes .n43 {
    width: 175px;
    line-height: 8px;
    margin: 7px 0 26px 118px;
    font-weight: normal;
}
.notes .n44 {
    width: 211px;
    margin: 9px 0 0 96px;
}
.notes .payback {
    width: 201px;
    height: 13px;
    margin-left: 23px;
    font-size: 5px;
    line-height: 7px;
    background: #92d050;
}
.notes .payoff {
    width: 158px;
    height: 12px;
    margin-left: 23px;
    line-height: 17px;
    background: #ff0;
}
.notes .blank {
    width: 60px;
    height: 13px;
    background: #ff0;
}
.typo {
    color: #900;
    text-decoration: underline;
}
.summary {
    margin-top: -1px;
}
.summary tr {
    height: 8px;
}
.summary .two {
    height: 12px;
}
.summary .three {
    height: 17px;
}
.summary th {
    text-align: left;
    padding-left: 2px;
    background: #c0504d;
}
.summary td {
    text-align: right;
    padding-right: 2px;
    vertical-align: bottom;
    background: #92d050;
}
.summary .plain {
    background: #fff;
}
.summary .mid {
    padding: 0;
    text-align: center;
}
.summary .fine {
    font-family: Lato, sans-serif;
    font-size: 5px;
    line-height: 5px;
    vertical-align: bottom;
}
.summary .pct {
    font-size: 8px;
}
.s41 {
    width: 78px;
}
.s42 {
    width: 94px;
}
.s43 {
    width: 66px;
}
.s44 {
    width: 80px;
}
.s44 tr {
    height: 9px;
}
.carry th, .carry td {
    border-top: 0;
}
.c43 {
    width: 95px;
    margin: 33px 0 0 355px;
}
.c45 {
    width: 81px;
    margin: 33px 0 0 374px;
}

/* status bar */
.status {
    flex: none;
    height: 28px;
    display: flex;
    align-items: center;
    padding-right: 12px;
    background: #f3f3f3;
    border-top: 1px solid #c6c6c6;
    font-size: 12px;
}
.words {
    margin: 0 26px;
}
.language {
    margin-right: 24px;
    font-size: 13px;
}
.views {
    margin-right: auto;
    display: flex;
    align-items: center;
    height: 100%;
}
.views button {
    width: 48px;
    height: 100%;
}
.views .on {
    background: #c5c5c5;
}
.zoom-sign {
    width: 12px;
    text-align: center;
    font-size: 20px;
    line-height: 20px;
    color: #666;
}
.views button + .zoom-sign {
    margin-right: 4px;
}
.views input {
    appearance: none;
    width: 125px;
    height: 14px;
    margin: 0 2px;
    background: linear-gradient(#999, #999) center / 100% 1px no-repeat, linear-gradient(#999, #999) center / 1px 8px no-repeat;
}
.views input::-webkit-slider-thumb {
    appearance: none;
    width: 6px;
    height: 14px;
    background: #666;
}
.percent {
    width: 56px;
    padding-left: 12px;
}

/* taskbar */
.taskbar {
    flex: none;
    height: 50px;
    display: flex;
    background: linear-gradient(to right, #1c222b, #332a38 26%, #42283f 40%, #38263b 64%, #272833 80%, #1b1f29 88%, #15191f);
    color: #fff;
}
.start {
    width: 60px;
}
.search {
    width: 430px;
    display: flex;
    align-items: center;
    gap: 15px;
    padding-left: 15px;
    margin: 1px 0;
    background: #f2f2f2;
    color: #222;
}
.search input {
    flex: 1;
    font-size: 18px;
}
.search input::placeholder {
    color: #333;
    opacity: 1;
}
.app {
    width: 50px;
    margin: 0 6px;
    border-top: 3px solid transparent;
    border-bottom: 3px solid transparent;
}
.app.running {
    border-bottom-color: #76aee0;
}
.app.current {
    width: 61px;
    margin: 0;
    background: rgba(255, 255, 255, 0.25);
    background-clip: padding-box;
}
.tray {
    margin-left: auto;
    display: flex;
    align-items: center;
    gap: 12px;
    padding-right: 28px;
}
.tray time {
    width: 78px;
    text-align: center;
    line-height: 22px;
}
.notice {
    position: relative;
    margin-left: 10px;
}
.notice b {
    position: absolute;
    left: 10px;
    top: 10px;
    width: 18px;
    height: 18px;
    border: 1px solid #aaa;
    border-radius: 50%;
    background: #222;
    font-size: 11px;
    line-height: 16px;
    text-align: center;
}

.watermark {
    position: absolute;
    left: 44%;
    bottom: 22px;
    width: 230px;
    display: flex;
    flex-direction: column;
    align-items: center;
    color: rgba(165, 165, 165, 0.45);
    font-weight: bold;
    pointer-events: none;
}
.mark {
    font-size: 64px;
    line-height: 76px;
}
.site {
    font-family: "Liberation Sans", sans-serif;
    font-size: 37px;
    line-height: 36px;
}
```
